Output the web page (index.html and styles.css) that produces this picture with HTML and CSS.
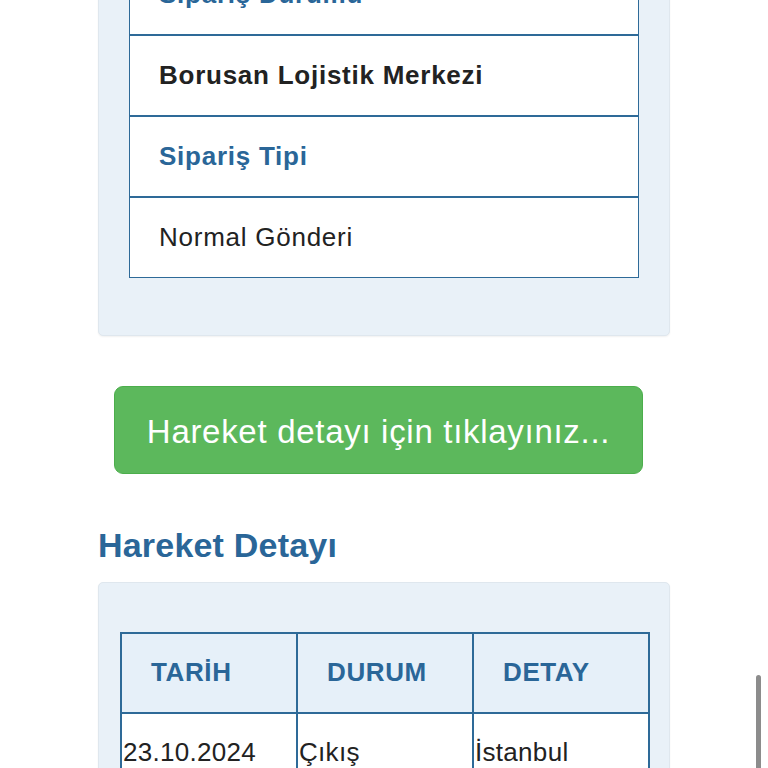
FILE: index.html
```html
<!DOCTYPE html>
<html lang="tr">
<head>
    <meta charset="UTF-8">
    <meta name="viewport" content="width=device-width, initial-scale=1.0">
    <title>Sipariş Takip</title>
    <link rel="stylesheet" href="styles.css">
</head>
<body>

    <div class="page">
        <div class="card card-info">
            <div class="info-list">
                <div class="info-row info-title">Sipariş Durumu</div>
                <div class="info-row info-value">Borusan Lojistik Merkezi</div>
                <div class="info-row info-title">Sipariş Tipi</div>
                <div class="info-row info-text">Normal Gönderi</div>
            </div>
        </div>

        <button class="detail-button">Hareket detayı için tıklayınız...</button>

        <h2 class="section-title">Hareket Detayı</h2>

        <div class="card card-table">
            <table class="move-table">
                <thead>
                    <tr>
                        <th>TARİH</th>
                        <th>DURUM</th>
                        <th>DETAY</th>
                    </tr>
                </thead>
                <tbody>
                    <tr>
                        <td>23.10.2024</td>
                        <td>Çıkış</td>
                        <td>İstanbul</td>
                    </tr>
                </tbody>
            </table>
        </div>
    </div>

    <div class="scroll-thumb"></div>

</body>
</html>
```

FILE: styles.css
```css
* {
    margin: 0;
    padding: 0;
    box-sizing: border-box;
}

html, body {
    height: 768px;
    overflow: hidden;
}

body {
    background-color: #fff;
    color: #222;
    font-family: 'Liberation Sans', Arial, sans-serif;
}

/* sayfa biraz aşağı kaydırılmış görünüm */
.page {
    width: 572px;
    margin: -78px 0 0 98px;
}

.card {
    background-color: #e9f1f8;
    border: 1px solid #dfe7ee;
    border-radius: 5px;
    box-shadow: 0 1px 2px rgba(0, 0, 0, 0.06);
}

.card-info {
    padding: 31px 30px 57px;
}

.info-list {
    background-color: #fff;
    border: 1px solid #2e6a98;
}

.info-row {
    height: 79px;
    display: flex;
    align-items: center;
    padding-left: 29px;
    font-size: 26px;
    letter-spacing: 0.75px;
}

.info-row + .info-row {
    height: 81px;
    border-top: 2px solid #2e6a98;
}

.info-title {
    color: #2a6698;
    font-weight: bold;
}

.info-value {
    color: #222;
    font-weight: bold;
}

.info-text {
    color: #222;
}

.detail-button {
    display: block;
    width: 529px;
    height: 88px;
    margin: 50px 0 0 16px;
    padding-top: 3px;
    background-color: #5cb85c;
    border: 1px solid #4cae4c;
    border-radius: 9px;
    color: #fff;
    font-family: inherit;
    font-size: 33px;
    letter-spacing: 0.7px;
}

.section-title {
    margin-top: 51px;
    color: #2a6698;
    font-size: 34px;
    line-height: 1.2;
    font-weight: bold;
    letter-spacing: 0.2px;
}

.card-table {
    margin-top: 16px;
    padding: 49px 19px 40px 21px;
}

.move-table {
    width: 100%;
    table-layout: fixed;
    border-collapse: collapse;
    font-size: 26px;
}

.move-table th,
.move-table td {
    border: 2px solid #2e6a98;
    height: 80px;
    text-align: left;
}

.move-table th {
    background-color: #e6f0f9;
    color: #2a6698;
    padding-left: 29px;
    font-weight: bold;
    letter-spacing: 0.6px;
}

.move-table td {
    background-color: #fff;
    color: #222;
    padding-left: 1px;
    letter-spacing: 0.3px;
}

.scroll-thumb {
    position: fixed;
    right: 7px;
    top: 675px;
    width: 5px;
    height: 120px;
    border-radius: 3px;
    background-color: #8c8c8c;
}
```
